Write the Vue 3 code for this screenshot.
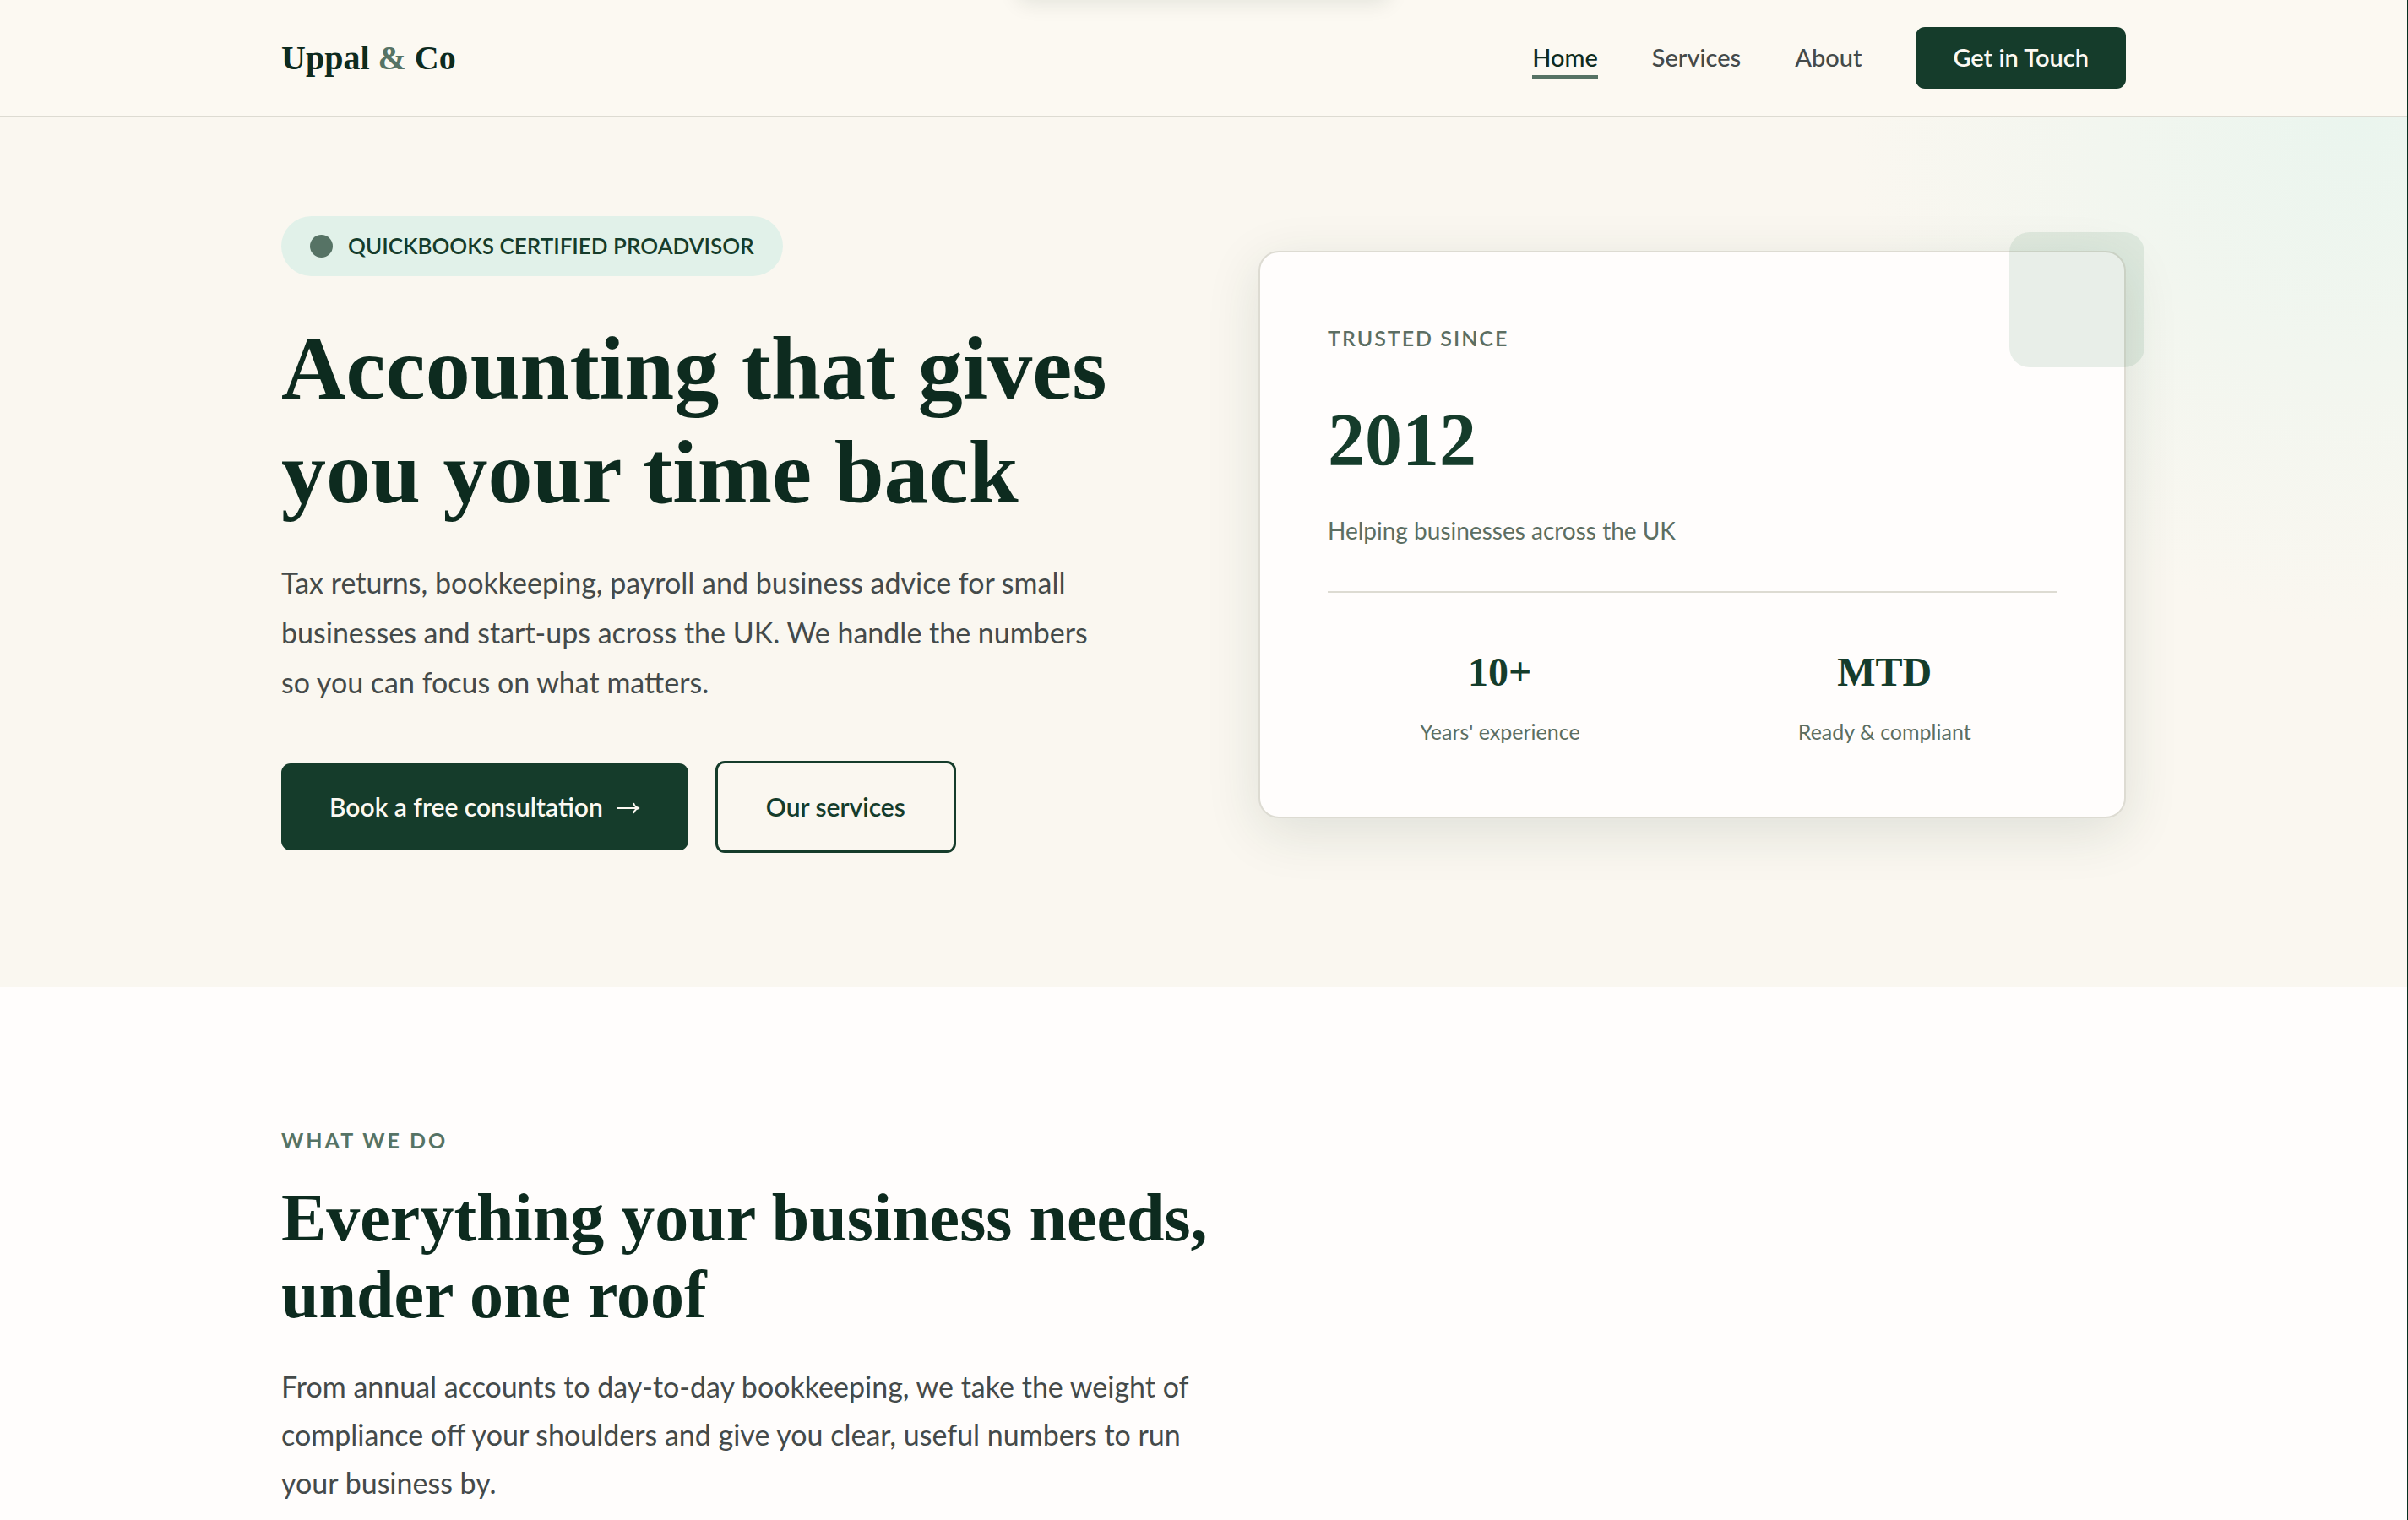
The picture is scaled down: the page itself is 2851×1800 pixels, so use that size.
<script setup>
import { ref } from 'vue'

const activeLink = ref('home')

const links = [
  { id: 'home', label: 'Home' },
  { id: 'services', label: 'Services' },
  { id: 'about', label: 'About' }
]

const stats = [
  { value: '10+', label: "Years' experience" },
  { value: 'MTD', label: 'Ready & compliant' }
]
</script>

<template>
  <div class="page">
    <div class="toast" aria-hidden="true"></div>

    <header class="site-header">
      <div class="container header-inner">
        <a href="#home" class="logo">Uppal <span>&amp;</span> Co</a>
        <nav class="nav">
          <a
            v-for="link in links"
            :key="link.id"
            :href="'#' + link.id"
            class="nav-link"
            :class="{ active: activeLink === link.id }"
            @click="activeLink = link.id"
          >{{ link.label }}</a>
          <a href="#contact" class="nav-cta">Get in Touch</a>
        </nav>
      </div>
    </header>

    <main>
      <!-- Hero -->
      <section id="home" class="hero">
        <div class="container hero-grid">
          <div class="hero-text">
            <p class="badge"><span class="dot"></span>QUICKBOOKS CERTIFIED PROADVISOR</p>
            <h1>Accounting that gives<br>you your time back</h1>
            <p class="lead">
              Tax returns, bookkeeping, payroll and business advice for small<br>
              businesses and start-ups across the UK. We handle the numbers<br>
              so you can focus on what matters.
            </p>
            <div class="actions">
              <a href="#contact" class="btn btn-primary">
                Book a free consultation
                <svg class="arrow" viewBox="0 0 28 22" aria-hidden="true">
                  <path d="M1 13H26M20 7C21 10 23 12.500 27 13C23 13.500 21 16 20 19" />
                </svg>
              </a>
              <a href="#services" class="btn btn-outline">Our services</a>
            </div>
          </div>

          <aside class="card">
            <p class="card-label">TRUSTED SINCE</p>
            <p class="card-year">2012</p>
            <p class="card-note">Helping businesses across the UK</p>
            <div class="stats">
              <div v-for="stat in stats" :key="stat.value" class="stat">
                <p class="stat-value">{{ stat.value }}</p>
                <p class="stat-label">{{ stat.label }}</p>
              </div>
            </div>
          </aside>
        </div>
      </section>

      <!-- Services intro -->
      <section id="services" class="services">
        <div class="container">
          <p class="eyebrow">WHAT WE DO</p>
          <h2>Everything your business needs,<br>under one roof</h2>
          <p class="intro">
            From annual accounts to day-to-day bookkeeping, we take the weight of<br>
            compliance off your shoulders and give you clear, useful numbers to run<br>
            your business by.
          </p>
        </div>
      </section>
    </main>
  </div>
</template>

<style>
body {
  background: #fffdfc;
}
</style>

<style scoped>
.page {
  position: relative;
  min-height: 100vh;
  box-sizing: border-box;
  overflow: hidden;
  border-right: 1px solid #06301f;
  background: #fffdfc;
  color: #444a4a;
  font-family: Lato, "Liberation Sans", sans-serif;
  font-size: 28px;
}

p, h1, h2 {
  margin: 0;
}

a {
  color: inherit;
  text-decoration: none;
}

.container {
  max-width: 2184px;
  margin: 0 auto;
}

/* sits just above the viewport, only its shadow shows */
.toast {
  position: absolute;
  z-index: 2;
  bottom: 100%;
  left: 50%;
  width: 440px;
  height: 60px;
  transform: translateX(-50%);
  border-radius: 12px;
  box-shadow: 0 4px 24px rgba(13, 43, 31, 0.1);
}

.site-header {
  background: #fcf9f2;
  border-bottom: 2px solid #dddbd2;
}

.header-inner {
  display: flex;
  align-items: center;
  justify-content: space-between;
  padding: 32px 0;
}

.logo {
  font-family: "Liberation Serif", serif;
  font-size: 40px;
  line-height: 48px;
  font-weight: bold;
  color: #0d2b1f;
}

.logo span {
  color: #567365;
}

.nav {
  display: flex;
  align-items: center;
  gap: 64px;
  font-size: 29px;
}

.nav-link {
  padding: 6px 0 3px;
  border-bottom: 4px solid transparent;
  line-height: 36px;
  font-weight: 500;
}

.nav-link.active {
  color: #0d2b1f;
  border-bottom-color: #567365;
}

.nav-cta {
  padding: 18px 44px 19px;
  border-radius: 11px;
  background: #153c2b;
  color: #fcf9f2;
  line-height: 36px;
  font-weight: 600;
}

.hero {
  padding: 117px 0 159px;
  background: radial-gradient(circle 600px at 98% 0, #eaf5ee 0%, rgba(234, 245, 238, 0) 100%), #faf7f0;
}

.hero-grid {
  display: grid;
  grid-template-columns: 1fr 1fr;
  gap: 130px;
  align-items: center;
}

.badge {
  display: inline-flex;
  align-items: center;
  gap: 18px;
  padding: 0 34px;
  border-radius: 36px;
  background: #e1f1e9;
  color: #153c2b;
  font-size: 26px;
  line-height: 71px;
  font-weight: 600;
}

.dot {
  width: 27px;
  height: 27px;
  border-radius: 50%;
  background: #567365;
}

h1, h2 {
  font-family: "Liberation Serif", serif;
  font-weight: bold;
  color: #0d2b1f;
  white-space: nowrap;
}

h1 {
  margin-top: 48px;
  font-size: 106px;
  line-height: 123px;
}

.lead {
  margin-top: 39px;
  font-size: 34px;
  line-height: 59px;
  white-space: nowrap;
}

.actions {
  display: flex;
  align-items: center;
  gap: 32px;
  margin-top: 64px;
}

.btn {
  display: flex;
  align-items: center;
  gap: 16px;
  padding: 33px 57px 34px;
  border-radius: 11px;
  font-size: 30px;
  line-height: 36px;
  font-weight: 600;
}

.btn-primary {
  background: #153c2b;
  color: #fcf9f2;
}

.btn-outline {
  border: 3px solid #153c2b;
  color: #153c2b;
}

.arrow {
  width: 28px;
  height: 22px;
  fill: none;
  stroke: currentColor;
  stroke-width: 2;
}

.card {
  position: relative;
  padding: 80px;
  border: 2px solid #dddbd2;
  border-radius: 24px;
  background: #fffdfc;
  color: #5c6e62;
  box-shadow: 0 16px 64px rgba(21, 60, 43, 0.12);
}

.card::after {
  content: '';
  position: absolute;
  top: -24px;
  right: -24px;
  width: 160px;
  height: 160px;
  border-radius: 24px;
  background: #5a9673;
  opacity: 0.14;
}

.card-label {
  font-size: 25px;
  line-height: 42px;
  font-weight: 600;
  letter-spacing: 2px;
}

.card-year {
  margin-top: 56px;
  font-family: "Liberation Serif", serif;
  font-size: 88px;
  line-height: 88px;
  font-weight: bold;
  color: #153c2b;
}

.card-note {
  margin-top: 39px;
  line-height: 48px;
}

.stats {
  display: grid;
  grid-template-columns: 1fr 1fr;
  gap: 48px;
  margin-top: 48px;
  padding-top: 64px;
  border-top: 2px solid #dddbd2;
  text-align: center;
}

.stat-value {
  font-family: "Liberation Serif", serif;
  font-size: 48px;
  line-height: 60px;
  font-weight: bold;
  color: #153c2b;
}

.stat-label {
  margin-top: 19px;
  font-size: 25px;
  line-height: 42px;
}

.services {
  padding-top: 160px;
}

.eyebrow {
  color: #567365;
  font-size: 25px;
  line-height: 42px;
  font-weight: bold;
  letter-spacing: 3px;
}

h2 {
  margin-top: 26px;
  font-size: 80px;
  line-height: 91px;
}

.intro {
  margin-top: 34px;
  font-size: 34px;
  line-height: 57px;
  white-space: nowrap;
}
</style>
